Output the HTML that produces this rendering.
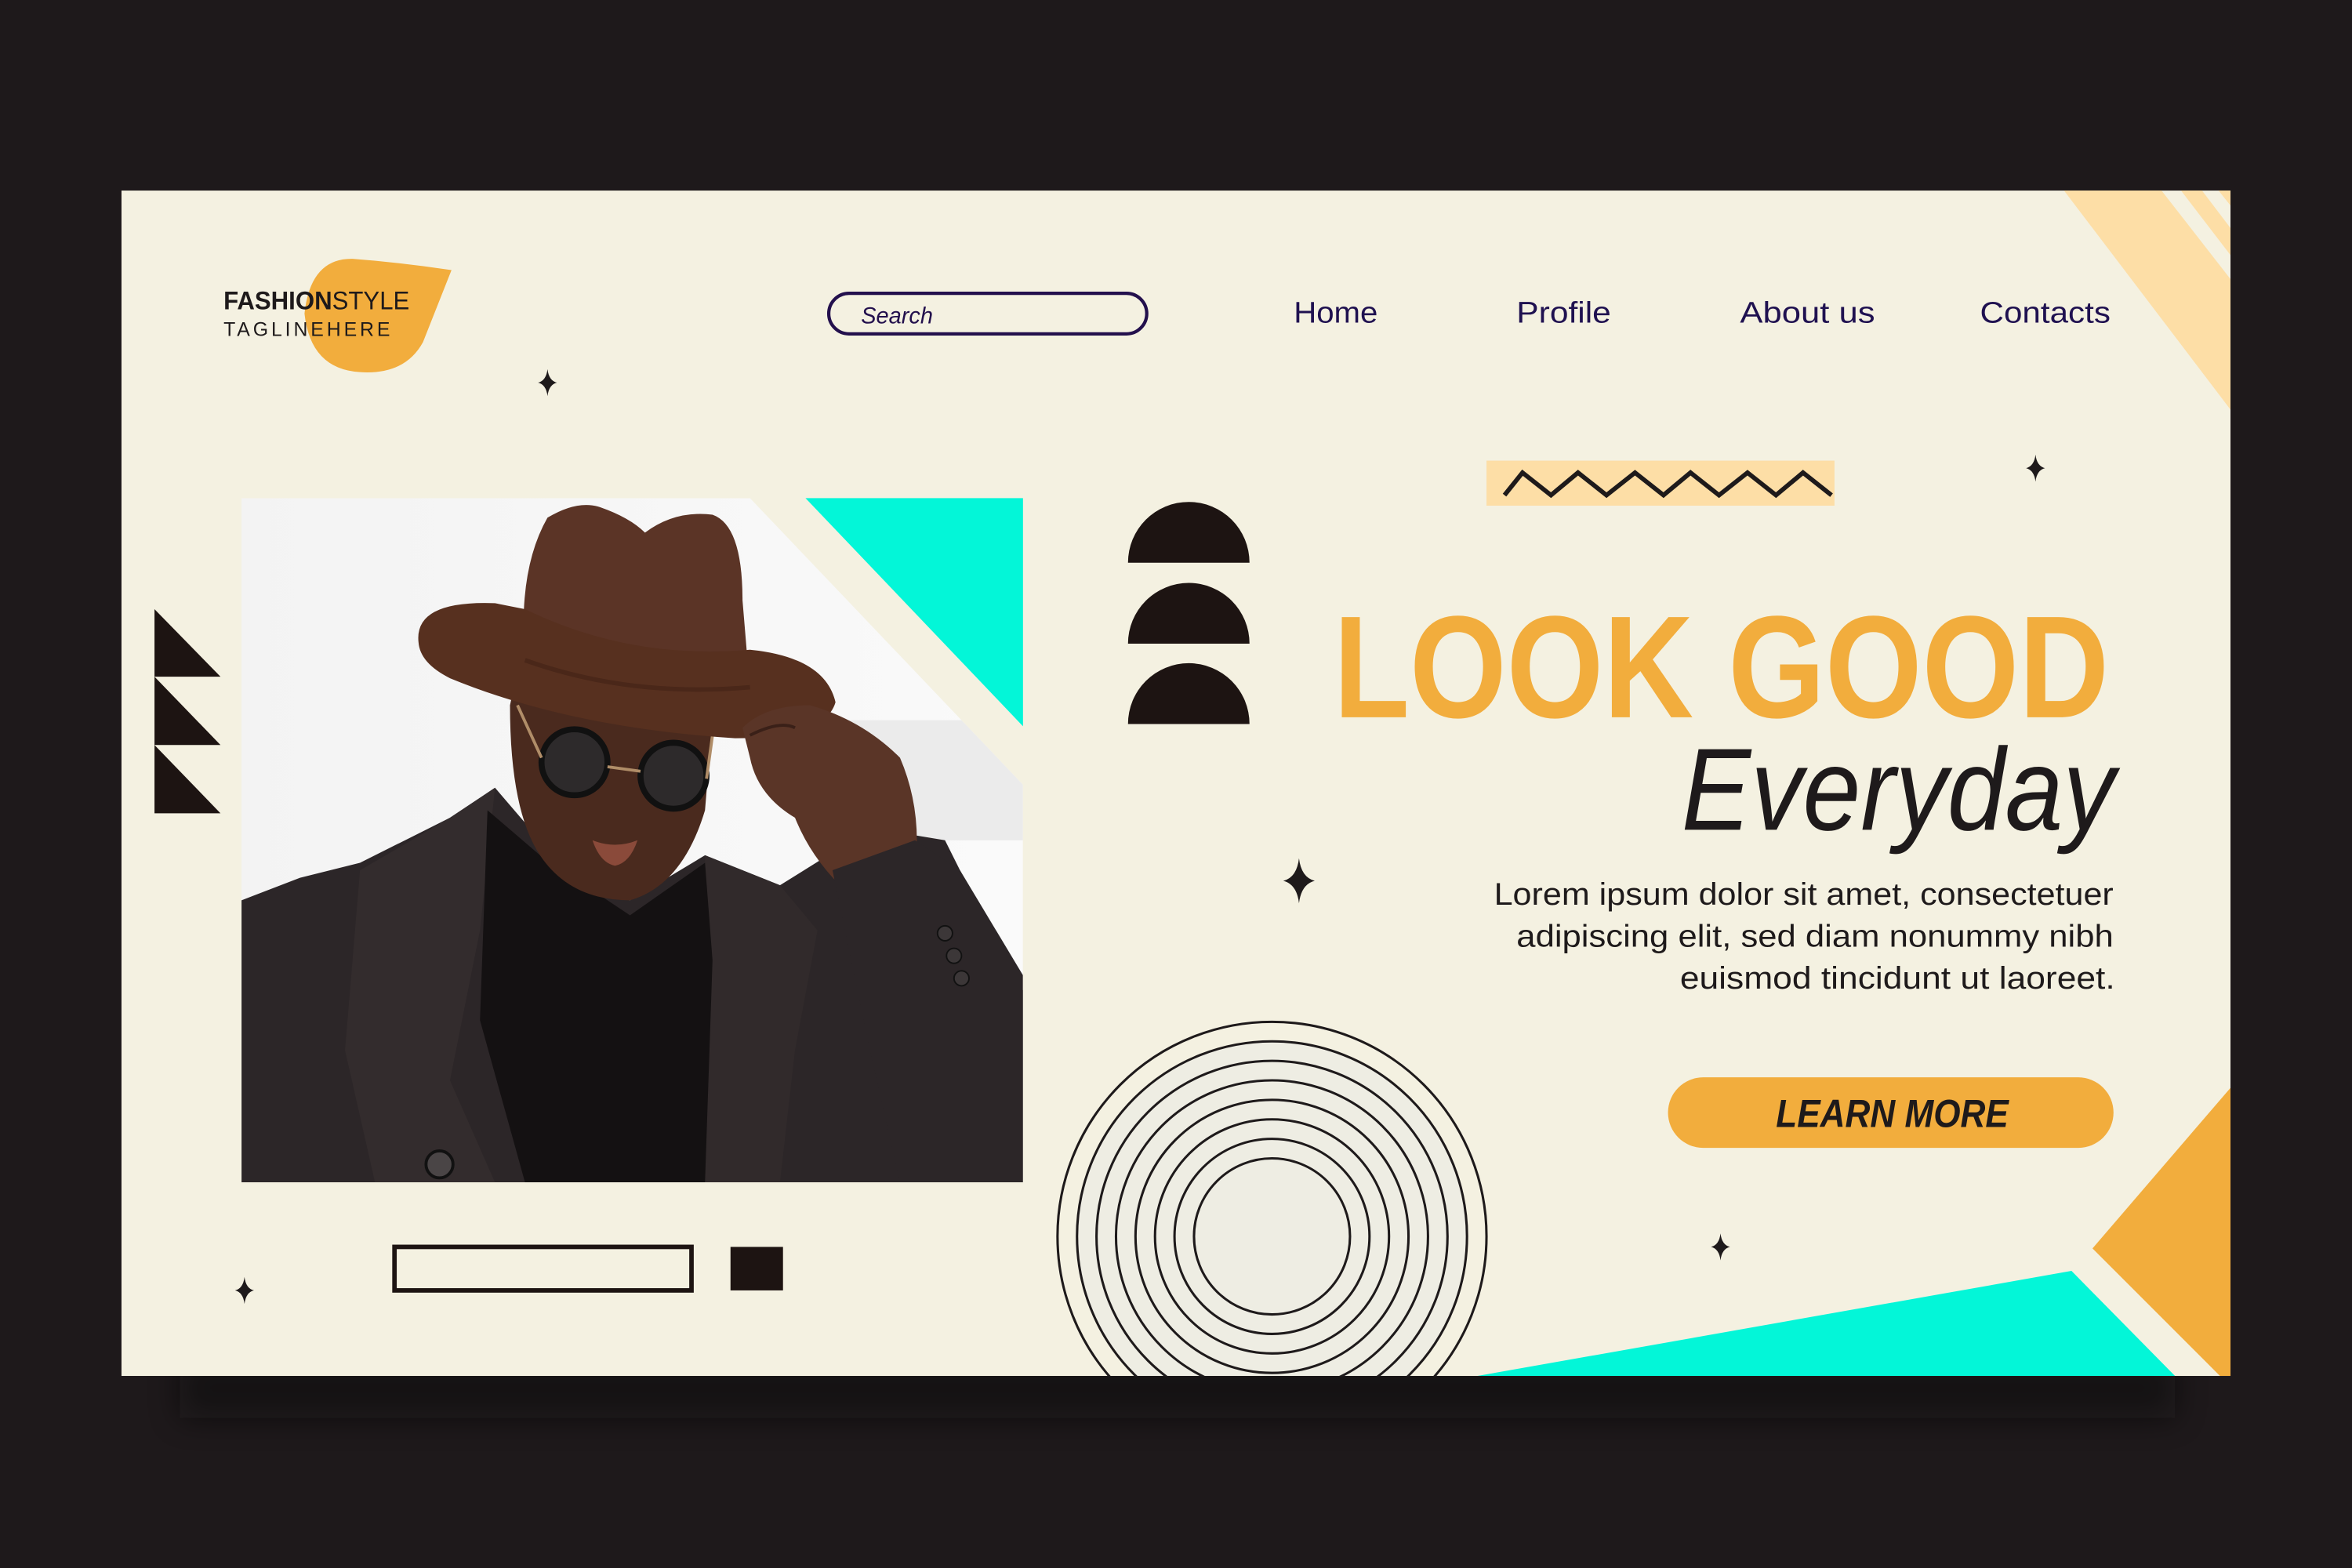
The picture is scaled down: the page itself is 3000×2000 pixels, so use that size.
<!DOCTYPE html>
<html><head><meta charset="utf-8">
<style>
html,body{margin:0;padding:0;background:#1e191b;}
svg{display:block;}
</style></head>
<body>
<svg width="3000" height="2000" viewBox="0 0 1568 1045" preserveAspectRatio="none" xmlns="http://www.w3.org/2000/svg">
<defs>
<clipPath id="card"><rect x="81" y="127" width="1406" height="790"/></clipPath>
<clipPath id="photo"><polygon points="161,332 500,332 682,523 682,788 161,788"/></clipPath>
<linearGradient id="bg" x1="0" y1="0" x2="1" y2="0"><stop offset="0" stop-color="#f3f3f3"/><stop offset="1" stop-color="#fafafa"/></linearGradient>
<filter id="blur" x="-10%" y="-100%" width="120%" height="300%"><feGaussianBlur stdDeviation="10"/></filter>
<path id="star" d="M0,-1 Q0.1,-0.15 0.7,0 Q0.1,0.15 0,1 Q-0.1,0.15 -0.7,0 Q-0.1,-0.15 0,-1Z"/>
</defs>
<rect width="1568" height="1045" fill="#1e191b"/>
<rect x="120" y="905" width="1330" height="40" fill="#0d0a0b" opacity="0.55" filter="url(#blur)"/>
<rect x="81" y="127" width="1406" height="790" fill="#f4f1e1"/>
<g clip-path="url(#card)">
  <polygon points="1376,127 1441,127 1487,186 1487,273" fill="#fddea6"/>
  <polygon points="1454,127 1468,127 1487,152 1487,170" fill="#fddea6"/>
  <polygon points="1479,127 1487,127 1487,137" fill="#fddea6"/>
  <polygon points="985,917 1381,847 1450,917" fill="#03f6d8"/>
  <polygon points="1395,832 1487,725 1487,917 1480,917" fill="#f2ad3d"/>
  <g fill="none" stroke="#1e1a1b" stroke-width="1.6">
    <circle cx="848" cy="824" r="143" fill="#f4f1e1"/>
    <circle cx="848" cy="824" r="130" fill="#eeede3"/>
    <circle cx="848" cy="824" r="117"/>
    <circle cx="848" cy="824" r="104"/>
    <circle cx="848" cy="824" r="91"/>
    <circle cx="848" cy="824" r="78"/>
    <circle cx="848" cy="824" r="65"/>
    <circle cx="848" cy="824" r="52"/>
  </g>
</g>
<path d="M235,172.5 Q268,175 301,180 L282,228 Q270,250 240,248 Q207,246 203,209 Q207,172 235,172.5Z" fill="#f2ad3d"/>
<text x="149" y="206" font-family="Liberation Sans, sans-serif" font-size="17" fill="#1e1a1b" textLength="124" lengthAdjust="spacingAndGlyphs"><tspan font-weight="bold">FASHION</tspan>STYLE</text>
<text x="149" y="224" font-family="Liberation Sans, sans-serif" font-size="13" fill="#1e1a1b" textLength="111" lengthAdjust="spacing">TAGLINEHERE</text>
<rect x="552.5" y="195.5" width="212" height="27" rx="13.5" fill="none" stroke="#23104d" stroke-width="2.2"/>
<text x="574" y="215.5" font-family="Liberation Sans, sans-serif" font-style="italic" font-size="15.5" fill="#23104d" textLength="48" lengthAdjust="spacingAndGlyphs">Search</text>
<g font-family="Liberation Sans, sans-serif" font-size="20" fill="#1f1150">
  <text x="862.5" y="215" textLength="56" lengthAdjust="spacingAndGlyphs">Home</text>
  <text x="1011" y="215" textLength="63" lengthAdjust="spacingAndGlyphs">Profile</text>
  <text x="1160" y="215" textLength="90" lengthAdjust="spacingAndGlyphs">About us</text>
  <text x="1320" y="215" textLength="87" lengthAdjust="spacingAndGlyphs">Contacts</text>
</g>
<g fill="#1e1a1b">
  <use href="#star" transform="translate(365,255) scale(9)"/>
  <use href="#star" transform="translate(1357,312) scale(9)"/>
  <use href="#star" transform="translate(866,587) scale(15)"/>
  <use href="#star" transform="translate(1147,831) scale(9)"/>
  <use href="#star" transform="translate(163,860) scale(9)"/>
</g>
<rect x="991" y="307" width="232" height="30" fill="#fddea6"/>
<polyline points="1003,330 1015,315 1034,330 1052,315 1071,330 1090,315 1109,330 1127,315 1146,330 1165,315 1184,330 1202,315 1221,330" fill="none" stroke="#1e1a1b" stroke-width="3"/>
<g fill="#1d1412">
  <polygon points="103,406 147,451 103,451"/>
  <polygon points="103,451 147,496.5 103,496.5"/>
  <polygon points="103,496.5 147,542 103,542"/>
</g>
<g fill="#1d1412">
  <path d="M752,375 A40.5,40.5 0 0 1 833,375Z"/>
  <path d="M752,429 A40.5,40.5 0 0 1 833,429Z"/>
  <path d="M752,482.5 A40.5,40.5 0 0 1 833,482.5Z"/>
</g>
<polygon points="537,332 682,332 682,484" fill="#03f6d8"/>
<g clip-path="url(#photo)">
  <rect x="161" y="332" width="521" height="456" fill="url(#bg)"/>
  <rect x="560" y="480" width="122" height="80" fill="#ebebeb"/>
  <polygon points="161,600 200,585 240,575 300,545 330,525 360,560 420,600 470,570 520,590 560,565 600,555 630,560 660,620 682,660 682,788 161,788" fill="#2c2628"/>
  <polygon points="240,580 300,545 330,525 320,620 300,720 330,788 250,788 230,700" fill="#332c2d"/>
  <polygon points="470,570 520,590 545,620 530,700 520,788 470,788" fill="#312a2b"/>
  <polygon points="325,540 360,570 420,610 470,575 475,640 470,788 350,788 320,680" fill="#141112"/>
  <path d="M340,470 Q345,440 400,445 Q470,448 475,480 L470,540 Q455,590 420,600 Q380,600 360,570 Q340,540 340,470Z" fill="#4a2a1e"/>
  <path d="M395,560 Q410,566 425,560 Q420,575 410,577 Q400,575 395,560Z" fill="#8a4a3a"/>
  <circle cx="383" cy="508" r="22" fill="#2d2a2b" stroke="#111" stroke-width="4"/>
  <circle cx="449" cy="517" r="22" fill="#2d2a2b" stroke="#111" stroke-width="4"/>
  <line x1="405" y1="511" x2="427" y2="514" stroke="#b08d68" stroke-width="2"/>
  <line x1="361" y1="505" x2="345" y2="470" stroke="#b08d68" stroke-width="2"/>
  <line x1="471" y1="519" x2="475" y2="490" stroke="#b08d68" stroke-width="2"/>
  <path d="M350,440 Q345,380 365,345 Q385,333 400,338 Q420,345 430,355 Q450,340 475,343 Q495,350 495,400 L500,460 Q420,470 350,440Z" fill="#5b3426"/>
  <path d="M279,428 Q276,400 330,402 L350,406 Q420,440 500,433 Q550,438 557,468 Q550,492 490,492 Q380,485 300,452 Q280,442 279,428Z" fill="#57301f"/>
  <path d="M350,440 Q420,465 500,458" fill="none" stroke="#4a2719" stroke-width="3"/>
  <path d="M495,485 Q510,470 540,470 Q575,480 600,505 Q615,540 610,580 Q590,600 560,590 Q540,570 530,545 Q505,530 500,505 Z" fill="#5a3527"/>
  <path d="M500,490 Q520,480 530,485" fill="none" stroke="#3a2018" stroke-width="2"/>
  <polygon points="555,580 610,560 640,580 682,650 682,788 600,788 580,700" fill="#2c2628"/>
  <circle cx="630" cy="622" r="5" fill="#3c3738" stroke="#111" stroke-width="1"/>
  <circle cx="636" cy="637" r="5" fill="#3c3738" stroke="#111" stroke-width="1"/>
  <circle cx="641" cy="652" r="5" fill="#3c3738" stroke="#111" stroke-width="1"/>
  <circle cx="293" cy="776" r="9" fill="#4a4546" stroke="#111" stroke-width="2"/>
</g>
<text x="889" y="478" font-family="Liberation Sans, sans-serif" font-weight="bold" font-size="97" fill="#f2ad3d" textLength="517" lengthAdjust="spacingAndGlyphs">LOOK GOOD</text>
<text x="1121" y="553" font-family="Liberation Sans, sans-serif" font-style="italic" font-size="78" fill="#1e1a1b" textLength="289" lengthAdjust="spacingAndGlyphs">Everyday</text>
<g font-family="Liberation Sans, sans-serif" font-size="21" fill="#1e1a1b">
  <text x="996" y="603" textLength="413" lengthAdjust="spacingAndGlyphs">Lorem ipsum dolor sit amet, consectetuer</text>
  <text x="1011" y="631" textLength="398" lengthAdjust="spacingAndGlyphs">adipiscing elit, sed diam nonummy nibh</text>
  <text x="1120" y="659" textLength="290" lengthAdjust="spacingAndGlyphs">euismod tincidunt ut laoreet.</text>
</g>
<rect x="1112" y="718" width="297" height="47" rx="23.5" fill="#f2ad3d"/>
<text x="1184" y="751" font-family="Liberation Sans, sans-serif" font-weight="bold" font-style="italic" font-size="26" fill="#1e1a1b" textLength="155" lengthAdjust="spacingAndGlyphs">LEARN MORE</text>
<rect x="263" y="831" width="198" height="29" fill="none" stroke="#1d1412" stroke-width="3"/>
<rect x="487" y="831" width="35" height="29" fill="#1d1412"/>
</svg>
</body></html>
